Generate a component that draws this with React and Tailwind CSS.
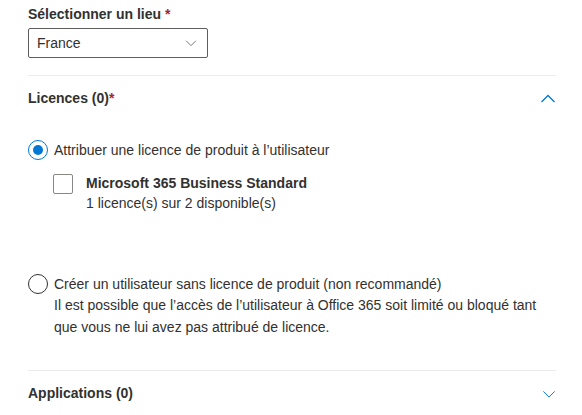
import React, { useState } from 'react';

const font = { fontFamily: '"Segoe UI", "Liberation Sans", Arial, sans-serif' };

const ChevronDown = ({ className }) => (
  <svg viewBox="0 0 16 16" className={className} fill="none" stroke="currentColor" strokeWidth="1.1">
    <path d="M1.5 5 L8 11.5 L14.5 5" />
  </svg>
);

const ChevronUp = ({ className }) => (
  <svg viewBox="0 0 16 16" className={className} fill="none" stroke="currentColor" strokeWidth="1.3">
    <path d="M1.5 11 L8 4.5 L14.5 11" />
  </svg>
);

export default function App() {
  const [choice, setChoice] = useState('assign');

  return (
    <div className="w-[582px] h-[415px] bg-white text-[#323130] text-[14px] overflow-hidden" style={font}>
      <div className="pl-[28px] pr-[26px] pt-[4px]">
        {/* Location */}
        <div className="font-semibold leading-[20px]">
          Sélectionner un lieu <span className="text-[#a4262c]">*</span>
        </div>
        <div className="mt-[4px] w-[180px] h-[30px] border border-[#605e5c] rounded-[2px] flex items-center justify-between pl-[8px] pr-[10px]">
          <span>France</span>
          <ChevronDown className="w-[12px] h-[12px] text-[#605e5c]" />
        </div>

        <div className="mt-[17px] border-t border-[#edebe9]" />

        {/* Licences */}
        <div className="h-[45px] flex items-center justify-between">
          <span className="font-semibold">
            Licences (0)<span className="text-[#a4262c]">*</span>
          </span>
          <ChevronUp className="w-[16px] h-[16px] text-[#0078d4]" />
        </div>

        <div className="mt-[19px] flex flex-col">
          <button className="flex items-center gap-[6px] text-left" onClick={() => setChoice('assign')}>
            <span className={`w-[20px] h-[20px] rounded-full border flex items-center justify-center shrink-0 ${choice === 'assign' ? 'border-[#0078d4]' : 'border-[#323130]'}`}>
              {choice === 'assign' && <span className="w-[10px] h-[10px] rounded-full bg-[#0078d4]" />}
            </span>
            <span className="leading-[20px]">Attribuer une licence de produit à l’utilisateur</span>
          </button>

          <div className="mt-[13px] ml-[25px] flex items-start gap-[13px]">
            <span className="mt-[1px] w-[20px] h-[20px] border border-[#8a8886] rounded-[2px] shrink-0" />
            <div>
              <div className="font-bold leading-[20px]">Microsoft 365 Business Standard</div>
              <div className="leading-[20px]">1 licence(s) sur 2 disponible(s)</div>
            </div>
          </div>

          <button className="mt-[61px] flex items-center gap-[6px] text-left" onClick={() => setChoice('none')}>
            <span className={`w-[20px] h-[20px] rounded-full border flex items-center justify-center shrink-0 ${choice === 'none' ? 'border-[#0078d4]' : 'border-[#323130]'}`}>
              {choice === 'none' && <span className="w-[10px] h-[10px] rounded-full bg-[#0078d4]" />}
            </span>
            <span className="leading-[20px]">Créer un utilisateur sans licence de produit (non recommandé)</span>
          </button>
          <p className="mt-[0px] ml-[26px] leading-[22px]">
            Il est possible que l’accès de l’utilisateur à Office 365 soit limité ou bloqué tant que vous ne lui avez pas attribué de licence.
          </p>
        </div>

        <div className="mt-[32px] border-t border-[#edebe9]" />

        {/* Applications */}
        <div className="h-[45px] flex items-center justify-between">
          <span className="font-semibold">Applications (0)</span>
          <ChevronDown className="w-[14px] h-[14px] text-[#0078d4]" />
        </div>
      </div>
    </div>
  );
}
